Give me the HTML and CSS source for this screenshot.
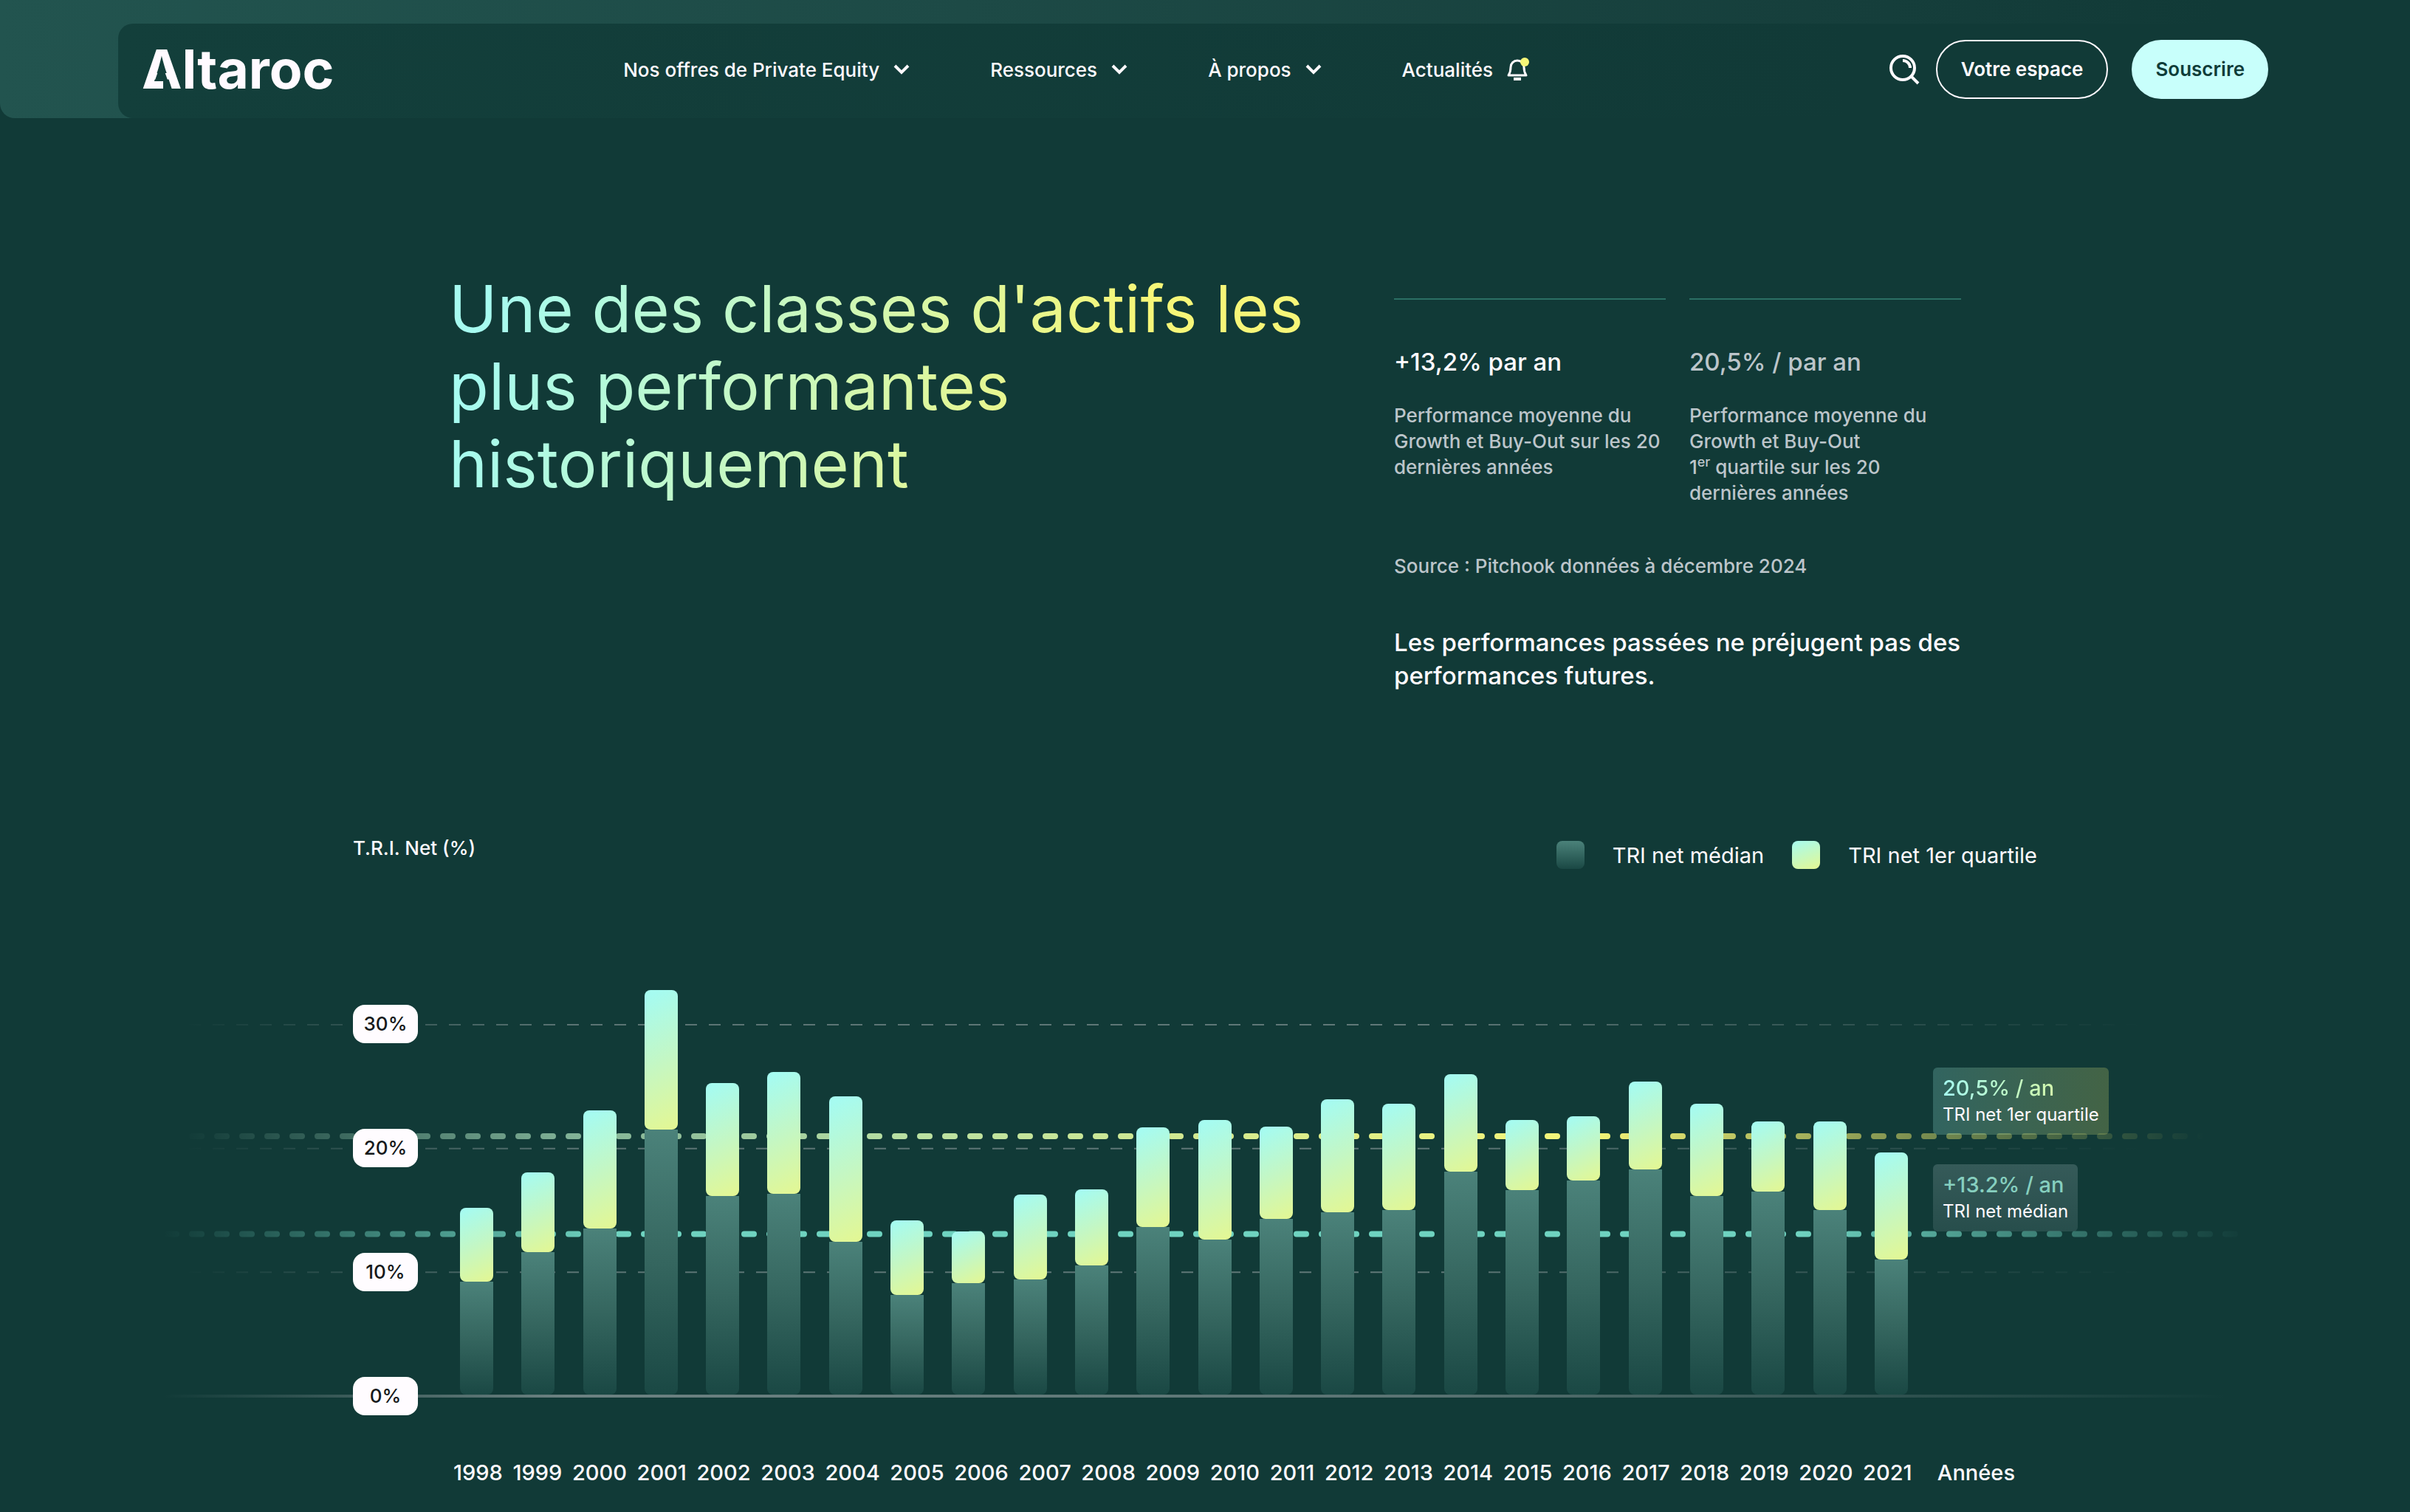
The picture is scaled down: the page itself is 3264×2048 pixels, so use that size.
FILE: index.html
```html
<!DOCTYPE html>
<html lang="fr">
<head>
  <meta charset="UTF-8">
  <meta name="viewport" content="width=device-width, initial-scale=1">
  <title>Altaroc - Private Equity</title>
  <link rel="stylesheet" href="styles.css">
</head>
<body>
  <header class="header">
    <div class="header-inner">
      <a class="logo" href="#">Altaroc</a>

      <nav class="nav">
        <button class="nav-item" type="button">Nos offres de Private Equity
          <svg class="chevron" viewBox="0 0 24 16"><path d="M3 3l9 9 9-9"/></svg>
        </button>
        <button class="nav-item" type="button">Ressources
          <svg class="chevron" viewBox="0 0 24 16"><path d="M3 3l9 9 9-9"/></svg>
        </button>
        <button class="nav-item" type="button">À propos
          <svg class="chevron" viewBox="0 0 24 16"><path d="M3 3l9 9 9-9"/></svg>
        </button>
        <a class="nav-item" href="#">Actualités
          <svg class="bell" viewBox="0 0 32 32">
            <path class="bell-body" d="M3 24c2-3 3-6 3-11a9 9 0 0 1 18 0c0 5 1 8 3 11z"/>
            <path class="bell-clapper" d="M10 27h10v4H10z"/>
            <circle class="bell-dot" cx="25" cy="6" r="6"/>
          </svg>
        </a>
      </nav>

      <div class="actions">
        <button class="search" type="button" aria-label="Rechercher">
          <svg viewBox="0 0 42 42"><circle cx="19" cy="19" r="16"/><path d="M31 31l9 9M19 9a10 10 0 0 1 10 10"/></svg>
        </button>
        <a class="btn btn-outline" href="#">Votre espace</a>
        <a class="btn btn-fill" href="#">Souscrire</a>
      </div>
    </div>
  </header>

  <main>
    <section class="hero">
      <h1>Une des classes d'actifs les plus performantes historiquement</h1>

      <div class="hero-side">
        <div class="stats">
          <div class="stat">
            <h2>+13,2% par an</h2>
            <p>Performance moyenne du Growth et Buy-Out sur les 20 dernières années</p>
          </div>
          <div class="stat stat-muted">
            <h2>20,5% / par an</h2>
            <p>Performance moyenne du Growth et Buy-Out<br>1<sup>er</sup> quartile sur les 20 dernières années</p>
          </div>
        </div>
        <p class="source">Source : Pitchook données à décembre 2024</p>
        <p class="warning">Les performances passées ne préjugent pas des performances futures.</p>
      </div>
    </section>

    <section class="chart">
      <div class="chart-head">
        <h3>T.R.I. Net (%)</h3>
        <ul class="legend">
          <li><span class="swatch swatch-median"></span>TRI net médian</li>
          <li><span class="swatch swatch-quartile"></span>TRI net 1er quartile</li>
        </ul>
      </div>

      <div class="plot">
        <svg class="lines" id="lines">
          <defs>
            <linearGradient id="gridFade" gradientUnits="userSpaceOnUse" x1="0" y1="0" x2="100%" y2="0">
              <stop offset="0.02" stop-color="#8b9a9b" stop-opacity="0"/>
              <stop offset="0.2" stop-color="#8b9a9b" stop-opacity="0.6"/>
              <stop offset="0.6" stop-color="#8b9a9b" stop-opacity="0.65"/>
              <stop offset="0.94" stop-color="#8b9a9b" stop-opacity="0"/>
            </linearGradient>
            <linearGradient id="baseFade" gradientUnits="userSpaceOnUse" x1="0" y1="0" x2="100%" y2="0">
              <stop offset="0.01" stop-color="#8b9a9b" stop-opacity="0"/>
              <stop offset="0.2" stop-color="#8b9a9b" stop-opacity="0.75"/>
              <stop offset="0.6" stop-color="#8b9a9b" stop-opacity="0.6"/>
              <stop offset="0.98" stop-color="#8b9a9b" stop-opacity="0"/>
            </linearGradient>
            <linearGradient id="quartileFade" gradientUnits="userSpaceOnUse" x1="0" y1="0" x2="100%" y2="0">
              <stop offset="0.02" stop-color="#8fc4b0" stop-opacity="0"/>
              <stop offset="0.2" stop-color="#9ccfae" stop-opacity="0.8"/>
              <stop offset="0.36" stop-color="#b9e0a2"/>
              <stop offset="0.68" stop-color="#f6f678"/>
              <stop offset="0.8" stop-color="#f0ec6c" stop-opacity="0.6"/>
              <stop offset="0.97" stop-color="#f0ec6c" stop-opacity="0"/>
            </linearGradient>
            <linearGradient id="medianFade" gradientUnits="userSpaceOnUse" x1="0" y1="0" x2="100%" y2="0">
              <stop offset="0.01" stop-color="#6fd3c0" stop-opacity="0"/>
              <stop offset="0.22" stop-color="#6fd3c0"/>
              <stop offset="0.78" stop-color="#6fd3c0"/>
              <stop offset="0.99" stop-color="#6fd3c0" stop-opacity="0"/>
            </linearGradient>
          </defs>
        </svg>
        <div class="axis">
          <span>30%</span>
          <span>20%</span>
          <span>10%</span>
          <span>0%</span>
        </div>
        <div class="bars" id="bars"></div>
        <div class="notes">
          <div class="note note-quartile">
            <strong>20,5% / an</strong>
            <span>TRI net 1er quartile</span>
          </div>
          <div class="note note-median">
            <strong>+13.2% / an</strong>
            <span>TRI net médian</span>
          </div>
        </div>
      </div>

      <div class="years">
        <div class="years-list" id="years"></div>
        <span>Années</span>
      </div>
    </section>
  </main>

  <script>
    const maxValue = 34;
    const firstYear = 1998;

    // [TRI net 1er quartile, TRI net médian]
    const data = [
      [15.2, 9.2], [18.1, 11.6], [23.1, 13.5], [32.8, 21.5], [25.3, 16.1], [26.2, 16.3],
      [24.2, 12.4], [14.2, 8.1], [13.3, 9.1], [16.3, 9.4], [16.7, 10.5], [21.7, 13.6],
      [22.3, 12.6], [21.8, 14.3], [24, 14.8], [23.6, 15], [26, 18.1], [22.3, 16.6],
      [22.6, 17.4], [25.4, 18.3], [23.6, 16.1], [22.2, 16.5], [22.2, 15], [19.7, 11]
    ];

    const lines = [
      { value: 30, type: 'grid' },
      { value: 20, type: 'grid' },
      { value: 10, type: 'grid' },
      { value: 0, type: 'base' },
      { value: 21, type: 'quartile' },
      { value: 13.1, type: 'median' }
    ];

    const bars = document.getElementById('bars');
    const years = document.getElementById('years');
    const svg = document.getElementById('lines');

    data.forEach(([quartile, median], i) => {
      const bar = document.createElement('div');
      bar.className = 'bar';
      bar.style.height = quartile / maxValue * 100 + '%';
      bar.innerHTML = `<div class="bar-quartile"></div><div class="bar-median" style="height: ${median / quartile * 100}%"></div>`;
      bars.appendChild(bar);

      const year = document.createElement('span');
      year.textContent = firstYear + i;
      years.appendChild(year);
    });

    lines.forEach(({ value, type }) => {
      const y = (1 - value / maxValue) * 100 + '%';
      const line = document.createElementNS('http://www.w3.org/2000/svg', 'line');
      line.setAttribute('class', 'line-' + type);
      line.setAttribute('x1', '0');
      line.setAttribute('x2', '100%');
      line.setAttribute('y1', y);
      line.setAttribute('y2', y);
      svg.appendChild(line);
    });
  </script>
</body>
</html>
```
FILE: styles.css
```css
:root {
  --bg: #113a37;
  --aqua: #a6fbf0;
  --lime: #e4f792;
  --yellow: #f6f678;
  --muted: #bcc5ca;
}

* {
  box-sizing: border-box;
}

body {
  margin: 0;
  background: var(--bg);
  color: #fffaff;
  font-family: Inter, "Liberation Sans", sans-serif;
  font-size: 26px;
  font-weight: 500;
}

h1, h2, h3, p, ul {
  margin: 0;
  padding: 0;
}

a, button {
  color: inherit;
  font: inherit;
  text-decoration: none;
}

button {
  padding: 0;
  border: 0;
  background: none;
  cursor: pointer;
}

/* Header */

.header {
  padding: 32px 160px 0;
  background: linear-gradient(90deg, #22544f, #1d4a46 40%, #163f3c 75%, var(--bg) 92%);
  border-radius: 0 0 20px 20px;
}

.header-inner {
  display: flex;
  align-items: center;
  height: 128px;
  padding: 0 32px 4px;
  background: linear-gradient(90deg, #133f3b, var(--bg) 80%);
  border-radius: 20px;
}

.logo {
  position: relative;
  font-size: 73px;
  font-weight: 700;
  line-height: 80px;
}

/* opens the crossbar of the A and puts a foot on its left leg */
.logo::before,
.logo::after {
  content: "";
  position: absolute;
}

.logo::before {
  left: 14px;
  top: 30px;
  width: 25px;
  height: 36px;
  background: #133f3b;
  clip-path: polygon(50% 0, 100% 100%, 0 100%);
}

.logo::after {
  left: 8px;
  top: 56px;
  width: 21px;
  height: 10px;
  background: currentColor;
}

.nav {
  display: flex;
  gap: 108px;
  margin-left: 12vw;
}

.nav-item {
  display: flex;
  align-items: center;
  gap: 18px;
  white-space: nowrap;
}

.chevron {
  width: 24px;
  height: 16px;
  fill: none;
  stroke: currentColor;
  stroke-width: 4;
}

.bell {
  width: 32px;
  height: 32px;
}

.bell-body {
  fill: none;
  stroke: currentColor;
  stroke-width: 3;
  stroke-linejoin: round;
}

.bell-clapper {
  fill: currentColor;
}

.bell-dot {
  fill: var(--yellow);
}

.actions {
  display: flex;
  align-items: center;
  margin-left: auto;
}

.search {
  width: 42px;
  height: 42px;
  margin-right: 22px;
}

.search svg {
  display: block;
  fill: none;
  stroke: currentColor;
  stroke-width: 4;
}

.btn {
  height: 80px;
  padding: 0 32px;
  border: 2px solid #fffaff;
  border-radius: 40px;
  line-height: 76px;
  font-weight: 600;
}

.btn-fill {
  margin-left: 32px;
  padding: 0 30px;
  background: #c8fffb;
  border-color: #c8fffb;
  color: #0f3d39;
}

/* Hero */

.hero {
  display: flex;
  justify-content: space-between;
  max-width: 2048px;
  margin: 0 auto;
  padding-top: 206px;
}

h1 {
  width: 1200px;
  font-size: 88px;
  font-weight: 400;
  line-height: 105px;
  background: linear-gradient(105deg, var(--aqua) 5%, #c8f8bf 36%, var(--yellow) 70%);
  -webkit-background-clip: text;
  background-clip: text;
  color: transparent;
}

.hero-side {
  width: 768px;
  margin-top: 38px;
}

.stats {
  display: grid;
  grid-template-columns: 1fr 1fr;
  gap: 32px;
}

.stat {
  padding-top: 62px;
  border-top: 2px solid #2b6f64;
}

.stat h2 {
  margin-bottom: 32px;
  font-size: 33px;
  font-weight: 500;
  line-height: 45px;
}

.stat p,
.source {
  color: var(--muted);
  line-height: 35px;
}

.stat-muted h2 {
  color: var(--muted);
}

sup {
  font-size: 18px;
  line-height: 0;
}

.source {
  margin-top: 64px;
}

.warning {
  margin-top: 64px;
  font-size: 33px;
  line-height: 45px;
}

/* Chart */

.chart {
  max-width: 2880px;
  margin: 0 auto;
  padding: 201px 0 16px;
}

.chart-head {
  display: flex;
  justify-content: space-between;
  padding: 0 313px 0 286px;
}

.chart-head h3 {
  font-size: 26px;
  font-weight: 500;
  line-height: 20px;
}

.legend {
  display: flex;
  gap: 38px;
  list-style: none;
  font-size: 29px;
  font-weight: 400;
}

.legend li {
  display: flex;
  align-items: center;
  gap: 38px;
}

.swatch {
  width: 38px;
  height: 38px;
  border-radius: 8px;
}

.swatch-median {
  background: linear-gradient(#4b827a, #1a4844);
}

.swatch-quartile {
  background: linear-gradient(160deg, var(--aqua), var(--lime));
}

.plot {
  position: relative;
  display: flex;
  height: 570px;
  margin-top: 144px;
  padding: 0 218px 0 286px;
}

.lines {
  position: absolute;
  inset: 0;
  width: 100%;
  height: 100%;
  overflow: visible;
}

.line-grid {
  stroke: url(#gridFade);
  stroke-width: 2;
  stroke-dasharray: 16 16;
}

.line-base {
  stroke: url(#baseFade);
  stroke-width: 4;
}

.line-quartile,
.line-median {
  stroke-width: 8;
  stroke-linecap: round;
  stroke-dasharray: 13 21;
}

.line-quartile {
  stroke: url(#quartileFade);
}

.line-median {
  stroke: url(#medianFade);
}

.axis {
  position: relative;
  display: flex;
  flex-direction: column;
  align-self: flex-end;
  gap: 116px;
  width: 88px;
  margin-bottom: -26px;
}

.axis span {
  background: #fffcff;
  border-radius: 16px;
  color: #16191b;
  line-height: 52px;
  text-align: center;
}

.bars {
  position: relative;
  flex: 1;
  display: flex;
  align-items: flex-end;
  justify-content: space-between;
  margin: 0 34px 0 57px;
}

.bar {
  display: flex;
  flex-direction: column;
  width: 45px;
  padding-bottom: 2px;
}

.bar-quartile {
  flex: 1;
  background: linear-gradient(155deg, var(--aqua) 5%, #c3f7c5 50%, var(--lime));
  border-radius: 8px;
}

.bar-median {
  background: linear-gradient(#4b827a, #35665f 50%, #1a4844);
  border-radius: 0 0 8px 8px;
}

.notes {
  position: relative;
  display: flex;
  flex-direction: column;
  align-items: flex-start;
  gap: 40px;
  width: 236px;
  padding-top: 125px;
}

.note {
  display: flex;
  flex-direction: column;
  padding: 8px 13px 11px;
  border-radius: 6px;
  white-space: nowrap;
}

.note strong {
  font-size: 29px;
  font-weight: 500;
  line-height: 40px;
}

.note span {
  font-size: 24px;
  font-weight: 400;
  line-height: 32px;
}

.note-quartile {
  background: linear-gradient(90deg, rgba(166, 251, 240, 0.22), rgba(246, 246, 120, 0.22));
}

.note-quartile strong {
  background: linear-gradient(90deg, var(--aqua), var(--lime));
  -webkit-background-clip: text;
  background-clip: text;
  color: transparent;
}

.note-median {
  background: linear-gradient(rgba(200, 220, 225, 0.2), rgba(200, 220, 225, 0.12));
}

.note-median strong {
  color: #86cfbf;
}

.years {
  display: flex;
  gap: 34px;
  margin-top: 84px;
  padding: 0 343px 0 422px;
  font-size: 29px;
  line-height: 40px;
}

.years-list {
  flex: 1;
  display: flex;
  justify-content: space-between;
}
```
